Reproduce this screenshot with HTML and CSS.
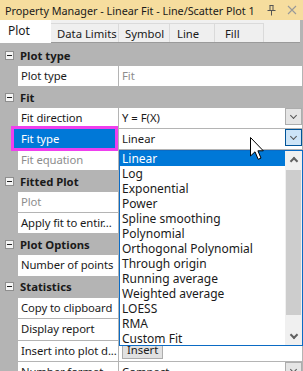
FILE: index.html
```html
<!DOCTYPE html>
<html lang="en">
<head>
  <meta charset="UTF-8" />
  <title>Property Manager</title>
  <link rel="stylesheet" href="styles.css">
</head>
<body>
  <div class="pm">
    <div class="titlebar">
      <span class="title">Property Manager - Linear Fit - Line/Scatter Plot 1</span>
      <span class="tb-icons">
        <svg width="11" height="12" viewBox="0 0 11 12">
          <path d="M3.5 1.5h4M4 1.5v5M7 1.5v5M1.5 6.5h8M5.5 6.5v5" stroke="#555" fill="none" />
        </svg>
        <svg width="10" height="10" viewBox="0 0 10 10">
          <path d="M1 1l8 8M9 1l-8 8" stroke="#999" stroke-width="1.1" />
        </svg>
      </span>
    </div>

    <div class="tabs">
      <div class="tab active">Plot</div>
      <div class="tab">Data Limits</div>
      <div class="tab">Symbol</div>
      <div class="tab">Line</div>
      <div class="tab">Fill</div>
    </div>

    <div class="grid">
      <div class="cat"><span class="exp"></span>Plot type</div>
      <div class="row">
        <div class="gutter"></div>
        <div class="name">Plot type</div>
        <div class="value disabled">Fit</div>
      </div>

      <div class="cat"><span class="exp"></span>Fit</div>
      <div class="row">
        <div class="gutter"></div>
        <div class="name">Fit direction</div>
        <div class="value">Y = F(X)<span class="drop"></span></div>
      </div>
      <div class="row">
        <div class="gutter"></div>
        <div class="name selected"><span>Fit type</span></div>
        <div class="value">Linear<span class="drop hot"></span></div>
      </div>
      <div class="row">
        <div class="gutter"></div>
        <div class="name disabled">Fit equation</div>
        <div class="value"></div>
      </div>

      <div class="cat"><span class="exp"></span>Fitted Plot</div>
      <div class="row">
        <div class="gutter"></div>
        <div class="name disabled">Plot</div>
        <div class="value"></div>
      </div>
      <div class="row">
        <div class="gutter"></div>
        <div class="name">Apply fit to entir...</div>
        <div class="value"></div>
      </div>

      <div class="cat"><span class="exp"></span>Plot Options</div>
      <div class="row">
        <div class="gutter"></div>
        <div class="name">Number of points</div>
        <div class="value"></div>
      </div>

      <div class="cat"><span class="exp"></span>Statistics</div>
      <div class="row">
        <div class="gutter"></div>
        <div class="name">Copy to clipboard</div>
        <div class="value"></div>
      </div>
      <div class="row">
        <div class="gutter"></div>
        <div class="name">Display report</div>
        <div class="value"></div>
      </div>
      <div class="row">
        <div class="gutter"></div>
        <div class="name">Insert into plot d...</div>
        <div class="value"><button class="btn">Insert</button></div>
      </div>
      <div class="row">
        <div class="gutter"></div>
        <div class="name">Number format</div>
        <div class="value">Compact<span class="drop"></span></div>
      </div>
    </div>

    <!-- open list of the Fit type combo -->
    <div class="dropdown">
      <ul class="items">
        <li class="active">Linear</li>
        <li>Log</li>
        <li>Exponential</li>
        <li>Power</li>
        <li>Spline smoothing</li>
        <li>Polynomial</li>
        <li>Orthogonal Polynomial</li>
        <li>Through origin</li>
        <li>Running average</li>
        <li>Weighted average</li>
        <li>LOESS</li>
        <li>RMA</li>
        <li>Custom Fit</li>
      </ul>
      <div class="scrollbar">
        <div class="arrow up"></div>
        <div class="thumb"></div>
        <div class="arrow down"></div>
      </div>
    </div>

    <svg class="cursor" width="14" height="24" viewBox="0 0 14 24">
      <path d="M0.5 0.5V19L5 14.8L8.2 22.3L11 21.1L7.9 13.8H13.3Z" fill="#fff" stroke="#000" stroke-width="1" stroke-linejoin="round" />
    </svg>
  </div>
</body>
</html>
```

FILE: styles.css
```css
body {
  margin: 0;
  padding: 0;
  background-color: #b4b4b4;
  font-family: 'Noto Sans', 'Open Sans', sans-serif;
  font-size: 11.3px;
  color: #1a1a1a;
}

.pm {
  position: relative;
  width: 303px;
  height: 371px;
  overflow: hidden;
}

.titlebar {
  height: 20px;
  background-color: #f6dd9e;
  display: flex;
  align-items: center;
  justify-content: space-between;
  padding: 0 6px 0 5px;
}

.title {
  white-space: nowrap;
  font-size: 10.8px;
}

.tb-icons {
  display: flex;
  align-items: center;
  gap: 10px;
}

.tb-icons svg {
  display: block;
}

.tabs {
  height: 23px;
  background-color: #f0f0f0;
  border-bottom: 1px solid #9a9a9a;
  display: flex;
  width: 300px;
  box-sizing: border-box;
}

.tab {
  margin-top: 3px;
  height: 19px;
  line-height: 19px;
  border: 1px solid #dadada;
  border-bottom: none;
  background-color: #efefef;
  padding: 0 6px;
  white-space: nowrap;
  box-sizing: border-box;
}

.tab + .tab {
  border-left: none;
}

.tab.active {
  margin-top: 0;
  height: 23px;
  line-height: 21px;
  width: 51px;
  background-color: #fff;
  border: none;
  padding: 0 8px;
  font-size: 12px;
}

.tab:nth-child(2) { width: 68px; }
.tab:nth-child(3) { width: 51px; }
.tab:nth-child(4) { width: 45px; padding-left: 7px; }
.tab:nth-child(5) { width: 49px; padding-left: 10px; }

.grid {
  width: 302px;
  padding-top: 2px;
  display: flex;
  flex-direction: column;
  gap: 1px;
}

.cat {
  height: 20px;
  display: flex;
  align-items: center;
  font-weight: bold;
}

.exp {
  width: 9px;
  height: 9px;
  margin: 0 6px 0 5px;
  box-sizing: border-box;
  border: 1px solid #8f8f8f;
  background-color: #f4f4f4;
  position: relative;
}

.exp::after {
  content: "";
  position: absolute;
  left: 1px;
  right: 1px;
  top: 3px;
  height: 1px;
  background-color: #222;
}

.row {
  height: 20px;
  display: grid;
  grid-template-columns: 17px 100px 1fr;
  column-gap: 1px;
}

.row:nth-child(n+10) {
  height: 20.5px;
}

.name,
.value {
  background-color: #fff;
  line-height: 20px;
  padding-left: 3px;
  white-space: nowrap;
  overflow: hidden;
}

.name {
  letter-spacing: -0.1px;
}

.value {
  display: flex;
  align-items: flex-start;
}

.disabled {
  color: #8d8d8d;
}

.name.selected {
  position: relative;
  overflow: visible;
  background-color: #0078d7;
  color: #fff;
}

.name.selected::before {
  content: "";
  position: absolute;
  left: -7px;
  right: 0;
  top: -3px;
  bottom: -2px;
  background-color: #0078d7;
  border: 3px solid #ee3fee;
}

.name.selected span {
  position: relative;
}

.drop {
  margin-left: auto;
  width: 17px;
  height: 17px;
  box-sizing: border-box;
  border: 1px solid #adadad;
  background-color: #e5e5e5;
  position: relative;
}

.drop::after {
  content: "";
  position: absolute;
  left: 5px;
  top: 4px;
  width: 4px;
  height: 4px;
  border-right: 1px solid #555;
  border-bottom: 1px solid #555;
  transform: rotate(45deg);
}

.drop.hot {
  background-color: #cce4f7;
  border-color: #005499;
}

.btn {
  font-family: inherit;
  font-size: 11.3px;
  margin-top: 1px;
  height: 17px;
  padding: 0 4px;
  line-height: 14px;
  background-color: #e1e1e1;
  border: 1px solid #adadad;
  color: #1a1a1a;
}

.dropdown {
  position: absolute;
  left: 119px;
  top: 150px;
  width: 184px;
  height: 196px;
  box-sizing: border-box;
  border: 1px solid #0b6bc4;
  background-color: #fff;
  display: flex;
  font-size: 12px;
}

.items {
  list-style: none;
  margin: 0;
  padding: 0;
  flex: 1;
}

.items li {
  height: 15px;
  line-height: 15px;
  padding-left: 2px;
  white-space: nowrap;
}

.items li.active {
  background-color: #0078d7;
  color: #fff;
}

.scrollbar {
  width: 17px;
  background-color: #f0f0f0;
  display: flex;
  flex-direction: column;
}

.arrow {
  height: 17px;
  position: relative;
}

.arrow::after {
  content: "";
  position: absolute;
  left: 6px;
  width: 4px;
  height: 4px;
  border-left: 2px solid #606060;
  border-top: 2px solid #606060;
}

.arrow.up::after {
  top: 7px;
  transform: rotate(45deg);
}

.arrow.down {
  margin-top: auto;
}

.arrow.down::after {
  top: 4px;
  transform: rotate(225deg);
}

.thumb {
  margin: 2px 1px 0;
  height: 145px;
  background-color: #cdcdcd;
}

.cursor {
  position: absolute;
  left: 250px;
  top: 137px;
}
```
